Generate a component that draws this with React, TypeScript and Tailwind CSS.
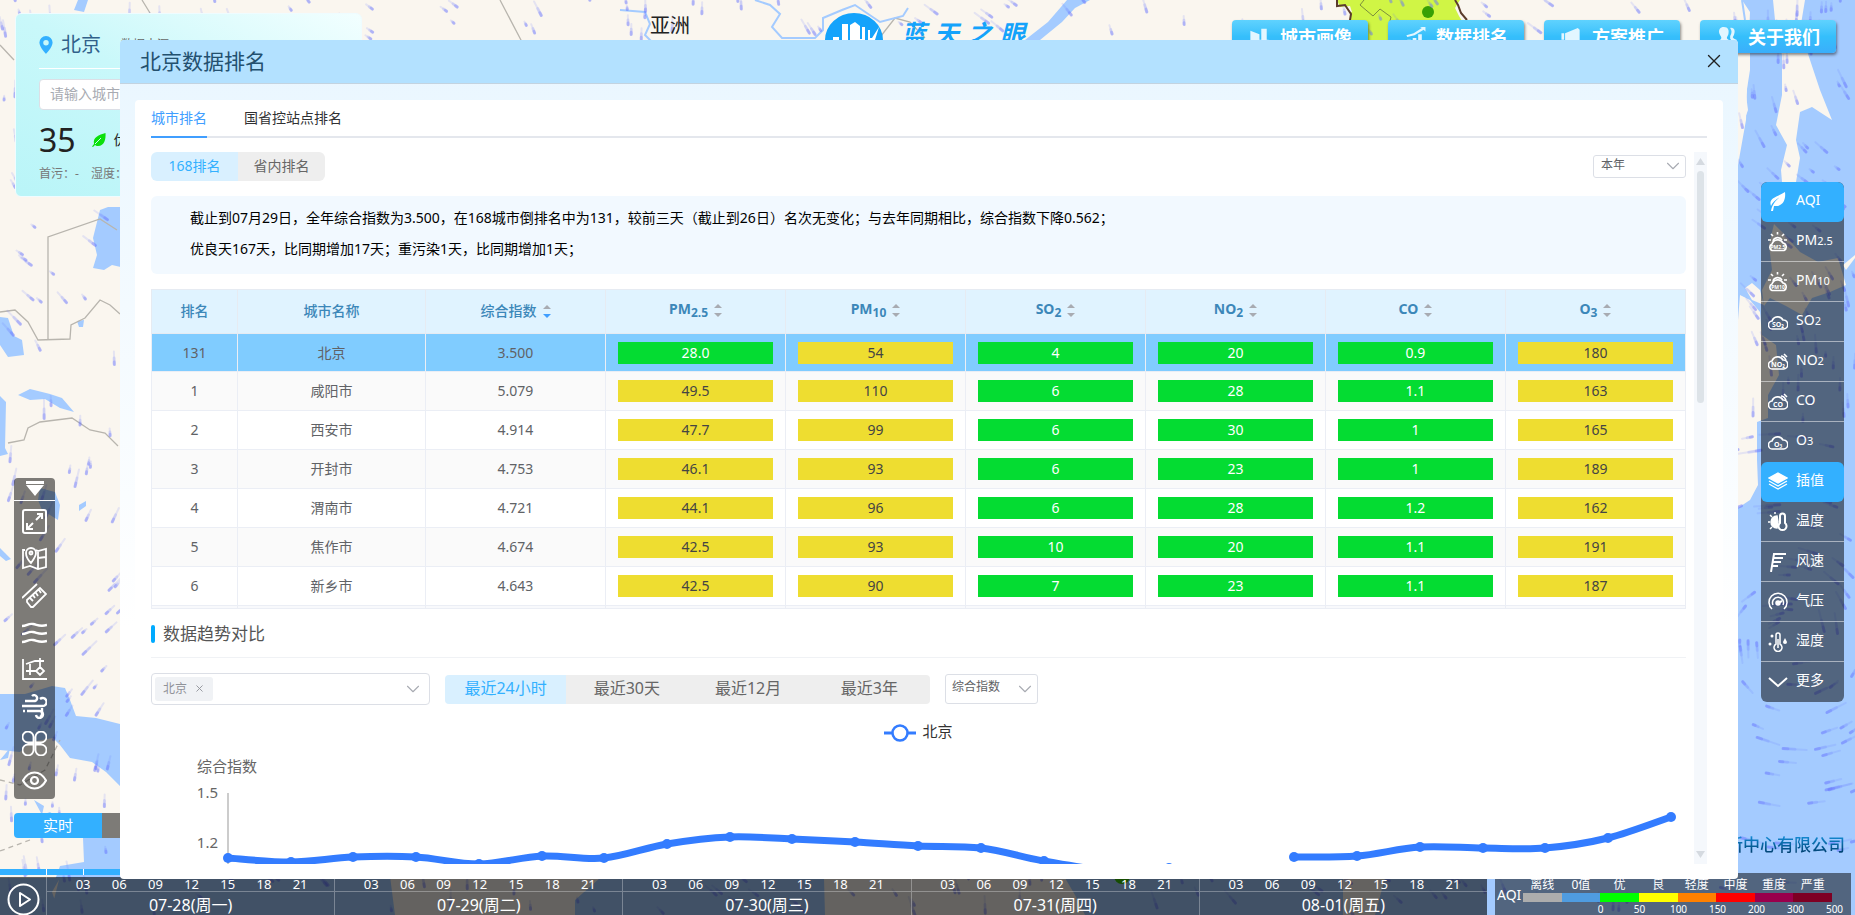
import React from 'react';
import { X, ChevronDown } from 'lucide-react';

const RANKING = [
    { rank: 131, city: '北京', index: '3.500', values: ['28.0', '54', '4', '20', '0.9', '180'] },
    { rank: 1, city: '咸阳市', index: '5.079', values: ['49.5', '110', '6', '28', '1.1', '163'] },
    { rank: 2, city: '西安市', index: '4.914', values: ['47.7', '99', '6', '30', '1', '165'] },
    { rank: 3, city: '开封市', index: '4.753', values: ['46.1', '93', '6', '23', '1', '189'] },
    { rank: 4, city: '渭南市', index: '4.721', values: ['44.1', '96', '6', '28', '1.2', '162'] },
    { rank: 5, city: '焦作市', index: '4.674', values: ['42.5', '93', '10', '20', '1.1', '191'] },
    { rank: 6, city: '新乡市', index: '4.643', values: ['42.5', '90', '7', '23', '1.1', '187'] },
];

const POLLUTANTS = [
    { name: 'PM', sub: '2.5', limit: 35 },
    { name: 'PM', sub: '10', limit: 50 },
    { name: 'SO', sub: '2', limit: 50 },
    { name: 'NO', sub: '2', limit: 40 },
    { name: 'CO', sub: '', limit: 2 },
    { name: 'O', sub: '3', limit: 100 },
];

const DAYS = ['07-28(周一)', '07-29(周二)', '07-30(周三)', '07-31(周四)', '08-01(周五)'];
const HOURS = ['03', '06', '09', '12', '15', '18', '21'];
const RANGES = ['最近24小时', '最近30天', '最近12月', '最近3年'];

const LEGEND = [
    { label: '离线', color: 'bg-[#adadad]', value: '0' },
    { label: '0值', color: 'bg-[#4f9ce0]', value: '50' },
    { label: '优', color: 'bg-[#00ff00]', value: '100' },
    { label: '良', color: 'bg-[#ffff00]', value: '150' },
    { label: '轻度', color: 'bg-[#ff8000]', value: '200' },
    { label: '中度', color: 'bg-[#ff0000]', value: '300' },
    { label: '重度', color: 'bg-[#99004c]', value: '500' },
    { label: '严重', color: 'bg-[#7e0023]', value: '' },
];

type Point = [number, number];

const TREND_A: Point[] = [
    [77, 113], [140, 117], [202, 112], [265, 112], [328, 119], [391, 111], [453, 113], [516, 99], [579, 92],
    [641, 94], [704, 97], [767, 101], [830, 103], [893, 116], [955, 125], [1018, 123],
];
const TREND_B: Point[] = [
    [1143, 112], [1206, 111], [1269, 102], [1332, 103], [1394, 103], [1457, 93], [1520, 72],
];

function smoothPath(points: Point[]) {
    let d = `M${points[0][0]} ${points[0][1]}`;
    for (let i = 0; i < points.length - 1; i++) {
        const p0 = points[Math.max(i - 1, 0)];
        const p1 = points[i];
        const p2 = points[i + 1];
        const p3 = points[Math.min(i + 2, points.length - 1)];
        d += ` C${p1[0] + (p2[0] - p0[0]) / 6} ${p1[1] + (p2[1] - p0[1]) / 6} ${p2[0] - (p3[0] - p1[0]) / 6} ${p2[1] - (p3[1] - p1[1]) / 6} ${p2[0]} ${p2[1]}`;
    }
    return d;
}

// Deterministic wind particles, following a swirling field
function windStreaks() {
    let seed = 11;
    const rand = () => {
        seed = (seed * 16807) % 2147483647;
        return seed / 2147483647;
    };
    return Array.from({ length: 430 }, () => {
        const zone = rand();
        const x = zone < 0.28 ? rand() * 120 : zone < 0.66 ? 1738 + rand() * 117 : rand() * 1855;
        const y = zone < 0.66 ? rand() * 880 : zone < 0.85 ? rand() * 40 : 875 + rand() * 40;
        const lowerRight = x > 1700 && y > 430;
        const angle = lowerRight ? Math.atan2(y - 640, x - 1790) + 1.57 : x < 200 && y > 440 ? 1.9 + Math.sin(y / 80) * 0.5 : 1.1 + Math.sin(x / 90 + y / 60) * 0.5;
        const length = lowerRight ? 10 + rand() * 16 : 4 + rand() * 15;
        return { x, y, dx: Math.cos(angle) * length, dy: Math.sin(angle) * length };
    });
}

const STREAKS = windStreaks();

function MapBackground() {
    return (
        <svg className="absolute inset-0 h-full w-full" viewBox="0 0 1855 915" preserveAspectRatio="xMidYMid slice" aria-hidden="true">
            <rect width="1855" height="915" fill="#faf6ef" />
            <g fill="#a4cbff">
                <path d="M100 210L108 207H125V268L112 265L104 270L93 268L97 255L93 238Z" />
                <path d="M0 317L8 318L14 336L22 340L24 355L8 357L0 345ZM0 396L6 402L5 448L8 454L0 456Z" />
                <path d="M18 395L30 389L50 394L62 398L74 412L60 408L45 399L30 400ZM40 488L55 492L60 505L58 520L42 510L38 500Z" />
                <path d="M0 548L5 553L11 559L6 561L0 556ZM79 505L86 501L86 506L79 511ZM77 321L84 320L83 327L79 327Z" />
                <path d="M0 694L25 694L52 686L65 688L70 700L76 716L96 718L120 724V786L106 772L92 762L70 758L60 745L53 738L30 742L20 752L0 750Z" />
                <path d="M34 800L44 806L42 815L50 812L58 818L48 826ZM83 838H125V880H55L60 866L84 862Z" />
                <path d="M78 0L88 0L84 12L74 10ZM0 760L10 748L8 758Z" />
                <path d="M1067 0H1090L1075 8L1062 22L1040 40H1025L1048 22Z" />
                <path d="M1742 0L1750 12L1748 60L1746 120L1738 165V915H1855V0Z" />
                <path d="M0 915V878H60L52 892L60 915ZM60 876H390L395 915H50ZM575 900L600 878H824L825 915H575ZM1065 878H1343V915H1085L1075 895ZM1385 878H1855V915H1375Z" />
            </g>
            <g fill="#faf6ef">
                <path d="M1735 0L1744 6L1748 22L1742 30L1750 42V70L1746 95L1748 110L1738 138Z" />
                <path d="M1773 0H1805L1800 30L1810 60L1820 90L1832 120L1812 107L1800 112L1796 140L1800 158L1796 182H1782L1781 170L1787 145L1776 125L1782 95L1782 55L1776 30Z" />
                <path d="M1774 224L1785 235L1800 252L1818 262L1838 258L1846 285L1830 292L1812 298L1802 315L1786 306L1770 298L1764 306L1762 290L1772 270L1769 245Z" />
                <path d="M1745 288L1752 283L1760 290L1764 305L1752 300ZM1740 295L1750 300L1760 312L1762 335L1776 345L1779 375L1768 395V418L1757 422L1757 460L1758 485L1750 500L1738 508V320Z" />
                <path d="M1843 265L1855 255V258L1846 270Z" />
            </g>
            <g fill="none" stroke="#b8b5ae" strokeWidth="1.3">
                <path d="M117 230L100 219L48 237V340M0 312L15 310L28 322L38 340L70 339L71 325L85 318L100 300L110 305L120 314" />
                <path d="M8 443L24 440L28 428L40 422L72 418L90 430L105 433L118 446M142 0L150 13M500 0L522 42M0 45L14 60M870 50L895 18L910 22L925 38" />
                <path strokeDasharray="5 4" d="M0 780L20 785L45 770L60 740M0 851L30 840" />
            </g>
            <g fill="none" stroke="#a4cbff" strokeWidth="2">
                <path d="M620 10L645 12L650 24L645 35L655 45M755 0L770 5L780 14L772 27L782 38H815L823 30V18L842 10L855 5L880 22L903 16L908 8M1840 0V14L1855 10M1742 0L1745 20" />
            </g>
            <path d="M1337 0L1340 7L1350 6L1353 15L1351 24L1358 26H1465L1459 16L1455 8L1460 0Z" fill="#d0f545" />
            <path d="M1350 12V45H1395V12Z" fill="#d0f545" />
            <path d="M1337 0L1337 6L1345 5L1351 14L1350 20L1354 26M1455 0L1458 5L1461 13L1467 20" fill="none" stroke="#5a3b2c" strokeWidth="2" />
            <path d="M1364 0L1360 5L1373 16L1380 9L1391 17L1389 25" fill="none" stroke="#7c8f3c" />
            <circle cx="1428" cy="12" r="6" fill="#38a005" />
            <circle cx="1122" cy="876" r="8" fill="#38c005" />
            <g stroke="#6672ff" strokeLinecap="round">
                {STREAKS.map((s, i) => (
                    <g key={i}>
                        <line x1={s.x - s.dx} y1={s.y - s.dy} x2={s.x} y2={s.y} strokeWidth="2" strokeOpacity="0.14" />
                        <line x1={s.x - s.dx / 2} y1={s.y - s.dy / 2} x2={s.x} y2={s.y} strokeWidth="3" strokeOpacity="0.18" />
                        <line x1={s.x - s.dx / 5} y1={s.y - s.dy / 5} x2={s.x} y2={s.y} strokeWidth="3" strokeOpacity="0.3" />
                    </g>
                ))}
            </g>
        </svg>
    );
}

function WeatherCard() {
    return (
        <section className="absolute left-[15px] top-[13px] h-[184px] w-[347px] rounded-md border border-[#effcff] bg-linear-to-tr from-[#b9f5f8] via-[#c9f8fa] to-[#f2ffff] px-[23px] pt-[11px]">
            <div className="flex h-11 items-center border-b border-white pb-1 text-xl text-[#31618a]">
                <svg className="mr-2 h-[18px] w-[14px]" viewBox="0 0 14 18">
                    <path d="M7 0A6.6 6.6 0 0 0 .4 6.600C.4 11.400 7 18 7 18S13.600 11.400 13.600 6.600A6.600 6.600 0 0 0 7 0ZM7 4A2.700 2.700 0 1 1 7 9.500A2.700 2.700 0 0 1 7 4Z" fill="#33b0ff" fillRule="evenodd" />
                </svg>
                <span>北京</span>
                <span className="ml-5 text-xs text-[#666]">数据来源</span>
            </div>
            <input aria-label="城市名称" placeholder="请输入城市名称" className="mt-[10px] h-[31px] w-[200px] rounded border border-[#dcdfe6] bg-white px-[10px] pb-[3px] text-sm placeholder:text-[#a8abb2]" />
            <div className="mt-[10px] flex h-10 items-center text-[#222]">
                <span className="text-[32px]">35</span>
                <svg className="ml-4 h-4 w-[14px]" viewBox="0 0 14 16">
                    <path d="M13.500 1C14 7 12.500 14 6 14C4.500 14 3.500 13.500 3 13L1 15L0 14.500L2 12C.5 5 7 3 13.500 1Z" fill="#0be00b" />
                    <path d="M3 12L9 6" stroke="#c9f8fa" />
                </svg>
                <span className="ml-2 text-sm">优</span>
            </div>
            <div className="mt-[6px] flex gap-3 text-xs leading-4 text-[#777]">
                <span>首污：-</span>
                <span>湿度：</span>
            </div>
        </section>
    );
}

function SiteLogo() {
    return (
        <div className="absolute left-[825px] top-[13px] flex items-start">
            <svg className="h-[54px] w-[58px]" viewBox="0 0 58 54">
                <ellipse cx="29" cy="27" rx="29" ry="27" fill="#14a3fb" />
                <path d="M5 27H8V24H14V28H17V11H23V27H25V12L30 9L35 13V26H37V14H40V28H43V17H45V25H47L54 14L50 27Z" fill="white" />
            </svg>
            <h1 className="ml-[18px] mt-1 flex gap-2 text-[25px] font-bold italic leading-8 text-[#14a3fb]">
                <span>蓝</span><span>天</span><span>之</span><span>眼</span>
            </h1>
        </div>
    );
}

const TOP_LINKS = [
    {
        label: '城市画像',
        icon: <path d="M2 4L12 8V20H2ZM14 2H20V16H14ZM12 14H22V20H12Z" />,
    },
    {
        label: '数据排名',
        icon: <path d="M2 9L10 7L19 1L17 0H23V5L21 3L11 9L3 11ZM3 14H7V22H3ZM9 12H13V22H9ZM15 8H19V22H15Z" />,
    },
    {
        label: '方案推广',
        icon: <path d="M1 7H4V14H1ZM5 7L19 1L21 3V17L18 19L11 15L12 21H8L7 15H5Z" />,
    },
    {
        label: '关于我们',
        icon: <path d="M8 0C13 0 14 4 13 8C12 11 10 12 13 14C16 15 17 16 17 20H0C0 16 1 15 4 14C7 12 4 10 3 7C2 3 4 0 8 0ZM15 1C20 0 21 5 19 9C17 12 18 12 22 14V17H18L15 13V10C17 6 17 4 15 1Z" />,
    },
];

function TopNav() {
    return (
        <nav className="absolute right-[19px] top-5 flex gap-5">
            {TOP_LINKS.map((link) => (
                <a key={link.label} href="#" className="flex h-[33px] w-[136px] items-center justify-center gap-[10px] rounded bg-linear-to-b from-[#5fd2fe] via-[#35bffb] to-[#3aaefb] text-lg font-bold text-white shadow-[1px_2px_3px_rgba(0,0,0,0.45)]">
                    <svg className="h-[20px] w-[22px] fill-[#e2f6ff]" viewBox="0 0 23 22">{link.icon}</svg>
                    {link.label}
                </a>
            ))}
        </nav>
    );
}

const TOOLS = [
    {
        label: '全屏',
        icon: (
            <svg viewBox="0 0 25 25" className="h-[25px] w-[25px]" fill="none" stroke="currentColor" strokeWidth="2">
                <rect x="1" y="1" width="23" height="23" rx="2" />
                <path d="M15 5H20V10M20 5L14 11M5 14V20H11M5 20L11 14" />
            </svg>
        ),
    },
    {
        label: '地图',
        icon: (
            <svg viewBox="0 0 25 25" className="h-[25px] w-[25px]" fill="none" stroke="currentColor" strokeWidth="1.8">
                <path d="M3 4H1V22L8 20L16 23L24 21V3L16 5L14 4M16 5V23M16 12L24 11M9 17C4 12 4 9 4 7A5 5 0 0 1 14 7C14 10 12 13 9 17Z" />
                <circle cx="9" cy="7" r="1.500" />
            </svg>
        ),
    },
    {
        label: '测距',
        icon: (
            <svg viewBox="0 0 25 25" className="h-[25px] w-[25px]" fill="none" stroke="currentColor" strokeWidth="1.8">
                <path d="M0 15L15 1M5 17L18 5L24 11L11 24L9 24L5 19ZM8 15L11 18M11 12L13 15M14 10L16 13M17 7L19 10" />
            </svg>
        ),
    },
    {
        label: '风场',
        icon: (
            <svg viewBox="0 0 25 25" className="h-[25px] w-[25px]" fill="none" stroke="currentColor" strokeWidth="2.4">
                <path d="M0 6C5 6 6 3 11 4S18 7 25 5M0 14C5 14 6 11 11 12S18 15 25 13M0 22C5 22 6 19 11 20S18 23 25 21" />
            </svg>
        ),
    },
    {
        label: '框选',
        icon: (
            <svg viewBox="0 0 25 25" className="h-[25px] w-[25px]" fill="none" stroke="currentColor" strokeWidth="1.8">
                <path d="M1 2V22H25M8 7V18M18 1V10M4 7L13 4H22M4 14H15M18 10L22 14L18 18L14 14Z" />
            </svg>
        ),
    },
    {
        label: '气流',
        icon: (
            <svg viewBox="0 0 25 25" className="h-[25px] w-[25px]" fill="none" stroke="currentColor" strokeWidth="2.4">
                <path d="M3 7H13A3 3 0 1 0 10 2M0 12H20A4 4 0 1 0 18 5M5 17H17A3.500 3.500 0 1 1 14 21M1 17H3" />
                <path d="M20 14V19A4 4 0 0 1 18 23" />
            </svg>
        ),
    },
    {
        label: '专题',
        icon: (
            <svg viewBox="0 0 25 25" className="h-[25px] w-[25px]" fill="none" stroke="currentColor" strokeWidth="1.8">
                <path d="M11.500 11.500H6.500A5.500 5.500 0 1 1 11.500 6.500ZM13.500 11.500H18.500A5.500 5.500 0 1 0 13.500 6.500ZM11.500 13.500H6.500A5.500 5.500 0 1 0 11.500 18.500ZM13.500 13.500H18.500A5.500 5.500 0 1 1 13.500 18.500Z" />
            </svg>
        ),
    },
    {
        label: '显示',
        icon: (
            <svg viewBox="0 0 25 25" className="h-[25px] w-[25px]" fill="none" stroke="currentColor" strokeWidth="2.2">
                <path d="M1 12.500C4 7 8 4.500 12.500 4.500S21 7 24 12.500C21 18 17 20.500 12.500 20.500S4 18 1 12.500Z" />
                <circle cx="12.500" cy="12.500" r="3.500" />
            </svg>
        ),
    },
];

function LeftToolbar() {
    return (
        <aside className="absolute bottom-[116px] left-[14px] w-[41px] overflow-hidden rounded bg-black/50 text-white">
            <button aria-label="收起" className="flex h-[23px] w-full items-center justify-center border-b border-white">
                <svg className="h-4 w-[18px]" viewBox="0 0 18 16" fill="currentColor">
                    <path d="M0 0H18V3H0ZM0 4H18L9 15Z" />
                </svg>
            </button>
            <div className="flex flex-col items-center gap-3 pb-[6px] pt-2">
                {TOOLS.map((tool) => (
                    <button key={tool.label} aria-label={tool.label} className="flex h-[25px] w-full items-center justify-center">
                        {tool.icon}
                    </button>
                ))}
            </div>
        </aside>
    );
}

function CloudIcon({ text, sun, accent }: { text: string; sun?: boolean; accent?: boolean }) {
    return (
        <svg viewBox="0 0 20 20" className="h-5 w-5" fill="none" stroke="currentColor" strokeWidth="1.6">
            {sun ? (
                <>
                    <path d="M5 9A5 5 0 0 1 14 8M9.500 0V2.500M3 2L5 4M16 2L14 4M0 8H3M16 8H19" />
                    <path d="M4 18.500A3.500 3.500 0 0 1 4 12A6 6 0 0 1 15 11A4 4 0 0 1 16 18.500Z" />
                </>
            ) : (
                <path d="M5 17A4 4 0 0 1 4 9A6 6 0 0 1 15 8A4.500 4.500 0 0 1 15.500 17Z" />
            )}
            {accent && <path d="M13 4C15 4 17 6 18 8M16 2L19 5" />}
            <text x="10" y={sun ? 17 : 15} textAnchor="middle" fontSize={sun ? 5 : 7} fontWeight="bold" fill="currentColor" stroke="none">{text}</text>
        </svg>
    );
}

const LAYERS = [
    {
        label: 'AQI',
        icon: (
            <svg viewBox="0 0 20 20" className="h-5 w-5" fill="currentColor">
                <path d="M17 0C18 8 15 15 6 14L5 19L3 19C4 13 7 9 12 5C7 8 4 11 3 14C0 6 9 5 17 0Z" />
            </svg>
        ),
    },
    { label: 'PM', sub: '2.5', icon: <CloudIcon text="PM2.5" sun /> },
    { label: 'PM', sub: '10', icon: <CloudIcon text="PM10" sun /> },
    { label: 'SO', sub: '2', icon: <CloudIcon text="SO₂" /> },
    { label: 'NO', sub: '2', icon: <CloudIcon text="NO₂" accent /> },
    { label: 'CO', icon: <CloudIcon text="CO" accent /> },
    { label: 'O', sub: '3', icon: <CloudIcon text="O₃" /> },
    {
        label: '插值',
        icon: (
            <svg viewBox="0 0 20 20" className="h-5 w-5" fill="none" stroke="currentColor" strokeWidth="1.3">
                <path d="M10 1L19 6L10 11L1 6Z" fill="currentColor" />
                <path d="M1 9L10 14L19 9M1 12L10 17L19 12" />
            </svg>
        ),
    },
    {
        label: '温度',
        icon: (
            <svg viewBox="0 0 20 20" className="h-5 w-5" fill="none" stroke="currentColor" strokeWidth="1.5">
                <path d="M9 4A6 6 0 0 0 9 16L10 10Z" fill="currentColor" />
                <path d="M0 10H2M2 3L4 5M2 17L4 15M7 0V2" />
                <path d="M12 11V4A2 2 0 0 1 17 4V11A4 4 0 1 1 12 11Z" strokeWidth="2" />
            </svg>
        ),
    },
    {
        label: '风速',
        icon: (
            <svg viewBox="0 0 20 20" className="h-5 w-5" fill="none" stroke="currentColor" strokeWidth="2">
                <path d="M3 20L6 2H18M5 6H15M5 10H13M4 14H10" />
            </svg>
        ),
    },
    {
        label: '气压',
        icon: (
            <svg viewBox="0 0 20 20" className="h-5 w-5" fill="none" stroke="currentColor" strokeWidth="1.5">
                <path d="M4 17A9 9 0 1 1 16 17M5 13A5.500 5.500 0 1 1 15 13" />
                <path d="M10 11L14 9" strokeWidth="2" />
                <circle cx="10" cy="11" r="2" fill="currentColor" />
            </svg>
        ),
    },
    {
        label: '湿度',
        icon: (
            <svg viewBox="0 0 20 20" className="h-5 w-5" fill="none" stroke="currentColor" strokeWidth="1.5">
                <path d="M8 12V3A2 2 0 0 1 12 3V12A4 4 0 1 1 8 12ZM10 7V16" />
                <circle cx="2" cy="12" r="1.500" fill="currentColor" stroke="none" />
                <circle cx="4" cy="4" r="1.500" fill="currentColor" stroke="none" />
                <path d="M17 6L19 10A2 2 0 1 1 15 10Z" fill="currentColor" stroke="none" />
            </svg>
        ),
    },
    {
        label: '更多',
        icon: (
            <svg viewBox="0 0 20 20" className="h-5 w-5" fill="none" stroke="currentColor" strokeWidth="2">
                <path d="M1 6L10 14L19 6" />
            </svg>
        ),
    },
];

function LayerMenu() {
    return (
        <aside className="absolute right-[11px] top-[182px] w-[83px] overflow-hidden rounded-md bg-black/50 text-sm text-white">
            {LAYERS.map((layer, i) => {
                const active = i === 0 || i === 7;
                return (
                    <button
                        key={i}
                        className={`flex h-10 w-full items-center gap-2 border-b pl-[7px] ${active ? 'rounded-md border-transparent bg-[#33b0ff]' : i === 6 || i === 12 ? 'border-transparent' : 'border-white/50'}`}
                    >
                        {layer.icon}
                        <span className="mb-[3px]">{layer.label}<span className="text-[11px]">{layer.sub}</span></span>
                    </button>
                );
            })}
        </aside>
    );
}

function SortCaret({ active }: { active?: boolean }) {
    return (
        <svg className="ml-[6px] inline-block h-[13px] w-2" viewBox="0 0 8 13">
            <path d="M4 0L8 4H0Z" fill="#a8abb2" />
            <path d="M4 13L0 9H8Z" fill={active ? '#409eff' : '#a8abb2'} />
        </svg>
    );
}

function RankingTable() {
    return (
        <div className="mt-[15px] h-[320px] overflow-hidden border-b border-[#ebeef5]">
            <table className="w-full table-fixed border-collapse text-center text-sm text-[#606266]">
                <colgroup>
                    <col className="w-[86px]" />
                    <col className="w-[188px]" />
                    <col span={7} />
                </colgroup>
                <thead>
                    <tr className="h-[44px] bg-[#e0f3ff] text-[#3c87b9]">
                        <th className="border border-[#e6ebf2] pb-[2px] font-medium">排名</th>
                        <th className="border border-[#e6ebf2] pb-[2px] font-medium">城市名称</th>
                        <th className="border border-[#e6ebf2] pb-[2px] font-medium">综合指数<SortCaret active /></th>
                        {POLLUTANTS.map((p) => (
                            <th key={p.name + p.sub} className="border border-[#e6ebf2] pb-[5px] font-bold">
                                {p.name}<sub className="text-xs">{p.sub}</sub><SortCaret />
                            </th>
                        ))}
                    </tr>
                </thead>
                <tbody>
                    {RANKING.map((row, i) => (
                        <tr key={row.rank} className={i === 0 ? 'h-[38px] bg-[#80ccff]' : i % 2 ? 'h-[39px] bg-[#fafafa]' : 'h-[39px] bg-white'}>
                            <td className="border border-[#ebeef5]">{row.rank}</td>
                            <td className="border border-[#ebeef5]">{row.city}</td>
                            <td className="border border-[#ebeef5]">{row.index}</td>
                            {row.values.map((value, j) => (
                                <td key={j} className="border border-[#ebeef5] px-3">
                                    <div className={Number(value) <= POLLUTANTS[j].limit ? 'h-[22px] bg-[#04dc32] leading-[22px] text-white' : 'h-[22px] bg-[#eedd30] leading-[22px] text-[#444]'}>
                                        {value}
                                    </div>
                                </td>
                            ))}
                        </tr>
                    ))}
                    <tr className="h-[39px] bg-[#f8f9fc]">
                        {Array.from({ length: 9 }, (_, i) => (
                            <td key={i} className="border border-[#ebeef5]" />
                        ))}
                    </tr>
                </tbody>
            </table>
        </div>
    );
}

function TrendChart() {
    return (
        <>
            <div className="mt-[14px] flex h-[26px] items-start justify-center gap-[6px] text-[15px] leading-6 text-[#333]">
                <svg className="mt-1 h-5 w-8" viewBox="0 0 32 20">
                    <path d="M0 10H32" stroke="#337cff" strokeWidth="3" />
                    <circle cx="16" cy="10" r="7.500" fill="white" stroke="#337cff" strokeWidth="2.500" />
                </svg>
                北京
            </div>
            <svg className="block w-full" viewBox="0 0 1535 160">
                <g fill="#666" fontSize="15">
                    <text x="46" y="27">综合指数</text>
                    <text x="67" y="53" textAnchor="end">1.5</text>
                    <text x="67" y="103" textAnchor="end">1.2</text>
                </g>
                <path d="M77 48V160" stroke="#ccc" strokeWidth="2" />
                {[TREND_A, TREND_B].map((points, i) => (
                    <g key={i}>
                        <path d={smoothPath(points)} fill="none" stroke="#337cff" strokeWidth="7" />
                        {points.map(([x, y]) => (
                            <circle key={x} cx={x} cy={y} r="5" fill="#337cff" />
                        ))}
                    </g>
                ))}
            </svg>
        </>
    );
}

function RankingDialog() {
    return (
        <div role="dialog" aria-labelledby="dialog-title" className="absolute bottom-9 left-[120px] right-[117px] top-10 flex flex-col overflow-hidden rounded bg-linear-to-b from-[#e9f6ff] to-white to-70%">
            <header className="flex h-[44px] shrink-0 items-center justify-between border-b border-[#c3d3e0] bg-[#b3e1ff] pl-5 pr-[13px]">
                <h2 id="dialog-title" className="text-[21px] text-[#23506f]">北京数据排名</h2>
                <button aria-label="关闭" className="pb-[2px] text-[#222]"><X className="h-[22px] w-[22px]" strokeWidth={1.5} /></button>
            </header>
            <div className="flex min-h-0 flex-1 flex-col px-[15px] pt-4">
                <div className="flex min-h-0 flex-1 flex-col rounded bg-white px-4 pb-[15px]">
                    <div role="tablist" className="flex h-[38px] shrink-0 gap-[37px] border-b-2 border-[#e4e7ed] text-sm">
                        <button role="tab" aria-selected="true" className="-mb-[2px] border-b-2 border-[#409eff] text-[#409eff]">城市排名</button>
                        <button role="tab" aria-selected="false" className="text-[#303133]">国省控站点排名</button>
                    </div>
                    <div className="mt-[14px] flex min-h-0 flex-1 gap-2">
                        <div className="min-w-0 flex-1 overflow-hidden">
                            <div className="flex items-start justify-between">
                                <div className="flex h-[29px] overflow-hidden rounded-md text-sm">
                                    <button className="w-[87px] bg-[#d9f0ff] pb-[2px] text-[#33b0ff]">168排名</button>
                                    <button className="w-[87px] bg-[#eee] pb-[2px] text-[#666]">省内排名</button>
                                </div>
                                <div className="relative mt-[3px] h-[23px]">
                                    <select aria-label="时间" className="block h-[23px] w-[93px] appearance-none rounded-[3px] border border-[#dcdfe6] bg-white pb-[3px] pl-[7px] text-xs text-[#606266]">
                                        <option>本年</option>
                                    </select>
                                    <ChevronDown className="pointer-events-none absolute right-[2px] top-0 h-[22px] w-[22px] text-[#a8abb2]" strokeWidth={1.2} />
                                </div>
                            </div>

                            <div className="mt-[15px] rounded-md bg-[#f2f9ff] px-[39px] pb-[10px] pt-[6px] text-sm leading-[31px] text-black">
                                <p>截止到07月29日，全年综合指数为3.500，在168城市倒排名中为131，较前三天（截止到26日）名次无变化；与去年同期相比，综合指数下降0.562；</p>
                                <p>优良天167天，比同期增加17天；重污染1天，比同期增加1天；</p>
                            </div>

                            <RankingTable />

                            <div className="mt-4 flex items-start border-b border-[#f0f2f5] pb-[14px]">
                                <span className="mr-2 h-[18px] w-1 rounded-xs bg-[#00aaff]" />
                                <h3 className="text-[17px] leading-[18px] text-[#555]">数据趋势对比</h3>
                            </div>

                            <div className="mt-[15px] flex items-center gap-[15px]">
                                <div className="flex h-8 w-[279px] items-center rounded border border-[#dcdfe6] bg-white px-[3px]">
                                    <span className="flex h-6 items-center gap-[7px] rounded-[3px] bg-[#f0f2f5] px-2 pb-px text-xs text-[#909399]">
                                        北京
                                        <button aria-label="移除北京"><X className="h-[11px] w-[11px]" strokeWidth={2} /></button>
                                    </span>
                                    <input aria-label="对比城市" className="min-w-0 flex-1" />
                                    <ChevronDown className="mr-[2px] h-[22px] w-[22px] text-[#a8abb2]" strokeWidth={1.2} />
                                </div>
                                <div className="flex h-[29px] w-[485px] overflow-hidden rounded text-base">
                                    {RANGES.map((range, i) => (
                                        <button key={range} className={i === 0 ? 'flex-1 bg-[#d9f0ff] pb-[3px] text-[#33b0ff]' : 'flex-1 bg-[#eee] pb-[3px] text-[#666]'}>{range}</button>
                                    ))}
                                </div>
                                <div className="relative">
                                    <select aria-label="指标" className="block h-[30px] w-[93px] appearance-none rounded-[3px] border border-[#dcdfe6] bg-white pb-[4px] pl-[6px] text-xs text-[#606266]">
                                        <option>综合指数</option>
                                    </select>
                                    <ChevronDown className="pointer-events-none absolute right-[2px] top-1 h-[22px] w-[22px] text-[#a8abb2]" strokeWidth={1.2} />
                                </div>
                            </div>

                            <TrendChart />
                        </div>

                        {/* Scrollbar track */}
                        <div className="flex w-[13px] flex-col items-center bg-[#f5f8fc] py-[6px]">
                            <svg className="h-[7px] w-[9px]" viewBox="0 0 9 7"><path d="M4.500 0L9 7H0Z" fill="#d5dae0" /></svg>
                            <div className="mt-[6px] h-[232px] w-[7px] rounded-full bg-[#dde3e8]" />
                            <svg className="mt-auto h-[7px] w-[9px]" viewBox="0 0 9 7"><path d="M4.500 7L0 0H9Z" fill="#d5dae0" /></svg>
                        </div>
                    </div>
                </div>
            </div>
        </div>
    );
}

function Timeline() {
    return (
        <footer className="absolute bottom-0 left-0 right-[368px] text-white">
            <div className="mb-[2px] flex h-[6px] w-[334px] gap-px bg-white">
                <div className="w-[46px] bg-[#33b0ff]" />
                <div className="w-9 bg-[#33b0ff]" />
                <div className="flex-1 bg-[#33b0ff]" />
            </div>
            <div className="flex h-[38px] bg-black/60">
                <button aria-label="播放" className="flex w-[46px] shrink-0 items-center justify-center pt-[7px]">
                    <svg className="h-[33px] w-[33px]" viewBox="0 0 33 33" fill="none" stroke="white" strokeWidth="2">
                        <circle cx="16.500" cy="16.500" r="15" />
                        <path d="M13 10L23 16.500L13 23Z" strokeLinejoin="round" />
                    </svg>
                </button>
                {DAYS.map((day) => (
                    <div key={day} className="min-w-0 flex-1 border-l border-white/30 text-center">
                        <div className="flex h-[15px] border-b border-white/30 pl-[18px] pr-4 text-[13px] leading-[15px]">
                            {HOURS.map((hour) => (
                                <span key={hour} className="flex-1">{hour}</span>
                            ))}
                        </div>
                        <div className="text-base leading-[26px]">{day}</div>
                    </div>
                ))}
            </div>
        </footer>
    );
}

function AqiLegend() {
    return (
        <div className="absolute bottom-0 right-1 flex h-[42px] w-[356px] items-start bg-black/50 pl-[2px] pt-[6px] text-xs text-white">
            <span className="w-[26px] pt-[6px] text-sm">AQI</span>
            <div className="flex w-[309px]">
                {LEGEND.map((item) => (
                    <div key={item.label} className="flex-1 text-center">
                        <div className="h-[14px] leading-[12px]">{item.label}</div>
                        <div className={`h-[9px] ${item.color}`} />
                    </div>
                ))}
            </div>
            <div className="absolute bottom-0 left-[86px] flex text-[10px] leading-3">
                {LEGEND.slice(0, 7).map((item) => (
                    <span key={item.value} className="w-[39px] text-center">{item.value}</span>
                ))}
            </div>
        </div>
    );
}

export default function App() {
    return (
        <main className="relative h-screen w-full overflow-hidden font-['Noto_Sans','Noto_Sans_CJK_SC',sans-serif]">
            <MapBackground />
            <span className="absolute left-[650px] top-3 text-xl text-[#222]">亚洲</span>
            <WeatherCard />
            <SiteLogo />
            <TopNav />
            <LeftToolbar />
            <div className="absolute bottom-[77px] left-[14px] flex h-[25px] overflow-hidden rounded text-[15px] text-white">
                <button className="w-[88px] bg-[#33b0ff]">实时</button>
                <button className="w-[88px] bg-black/50">预报</button>
            </div>
            <LayerMenu />
            <span className="absolute bottom-[58px] right-[10px] bg-linear-to-b from-[#1aa0f0] to-[#00305a] bg-clip-text text-[17px] font-medium text-transparent">创新中心有限公司</span>
            <Timeline />
            <AqiLegend />
            <RankingDialog />
        </main>
    );
}
